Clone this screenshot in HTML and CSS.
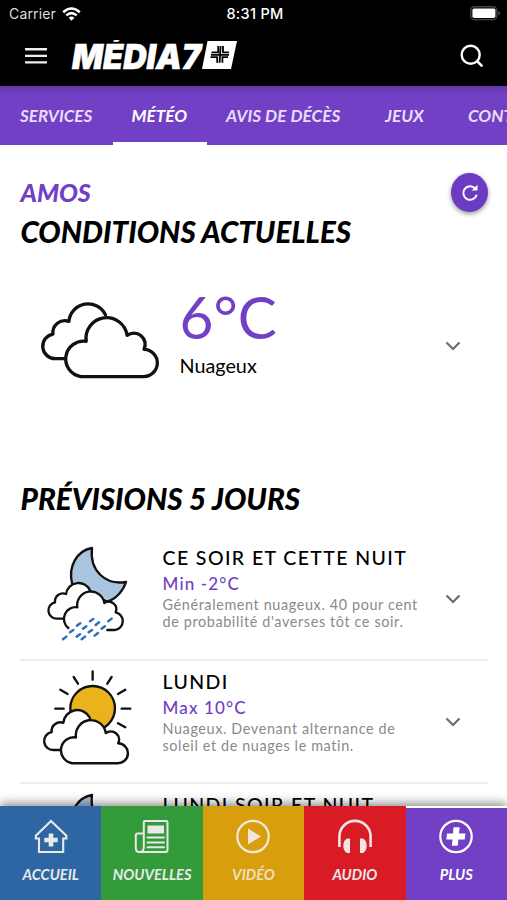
FILE: index.html
```html
<!DOCTYPE html>
<html lang="fr">
<head>
<meta charset="utf-8">
<title>Météo</title>
<link rel="stylesheet" href="styles.css">
</head>
<body>
<svg class="defs" width="0" height="0" aria-hidden="true">
  <symbol id="clouds" viewBox="55 60 370 240" overflow="visible">
    <g fill="#fff" stroke="#111" stroke-width="10" stroke-linejoin="round" stroke-linecap="round">
      <path d="M258 104A58 58 0 0 0 148 124A36 36 0 0 0 100 162A37.3 37.3 0 0 0 108 236H150L220 150Z" stroke="none"/>
      <path d="M258 104A58 58 0 0 0 148 124A36 36 0 0 0 100 162A37.3 37.3 0 0 0 108 236H135" fill="none"/>
      <path d="M184 290H372A41 41 0 0 0 374 208A34 34 0 0 0 323 166A62 62 0 0 0 200 184A53.5 53.5 0 0 0 184 290Z"/>
    </g>
  </symbol>
  <symbol id="night" viewBox="30 30 270 310">
    <path d="M186 54C140 62 114 110 126 160L230 215C258 208 280 182 288 156C228 166 178 124 186 54Z" fill="#a9c4df" stroke="#111" stroke-width="7" stroke-linejoin="round"/>
    <g fill="#fff" stroke="#111" stroke-width="7" stroke-linecap="round" stroke-linejoin="round">
      <path d="M181 183A38 38 0 0 0 108 192A24 24 0 0 0 75 217A24.8 24.8 0 0 0 82 266H110L150 215Z" stroke="none"/>
      <path d="M181 183A38 38 0 0 0 108 192A24 24 0 0 0 75 217A24.8 24.8 0 0 0 82 266H99" fill="none"/>
      <path d="M115 294A35 35 0 0 1 142 232A41 41 0 0 1 223 219A23 23 0 0 1 257 247A27 27 0 0 1 256 300H232"/>
    </g>
    <path d="M99 328L109 320M120 307L130 300M141 287L151 280M140 320L150 313M159 296L169 289M180 274L190 267M155 328L165 320M176 307L186 300M197 285L207 277M194 317L204 309M215 296L225 289M235 274L245 266" stroke="#2e70bd" stroke-width="7.5" stroke-linecap="round"/>
  </symbol>
  <symbol id="chevron" viewBox="0 0 16 10"><path d="M1.5 1.5L8 8L14.5 1.5" fill="none" stroke="#6b6b6b" stroke-width="2.2"/></symbol>
</svg>

<header class="header">
  <div class="status">
    <div class="carrier"><span>Carrier</span>
      <svg width="19" height="14" viewBox="0 0 19 14"><g fill="none" stroke="#fff" stroke-width="2.5"><path d="M1.2 5.2Q9.5 -2.2 17.8 5.2"/><path d="M4.3 8.4Q9.5 3.8 14.7 8.4"/></g><path d="M6.6 10.7Q9.5 8.4 12.4 10.7L9.5 13.7Z" fill="#fff"/></svg>
    </div>
    <time>8:31 PM</time>
    <svg class="battery" width="31" height="15" viewBox="0 0 31 15"><rect x=".8" y=".8" width="26" height="12.8" rx="3.6" fill="none" stroke="#444" stroke-width="1.4"/><rect x="2.4" y="2.4" width="23" height="9.6" rx="1.8" fill="#fff"/><path d="M28.4 4.8Q31.5 7.2 28.4 9.6Z" fill="#555"/></svg>
  </div>
  <div class="appbar">
    <svg width="22" height="16" viewBox="0 0 22 16"><path d="M0 1.3H22M0 7.9H22M0 14.4H22" stroke="#eee" stroke-width="2.4"/></svg>
    <svg class="logo" width="168" height="32" viewBox="0 0 168 32">
      <text x="1" y="29" textLength="129" lengthAdjust="spacingAndGlyphs" class="logo-text">MÉDIA7</text>
      <path d="M136.500 1H166L160 29H131Z" fill="#fff"/>
      <path d="M147.200 6V12.400H140.500M152 6V12.400H158M146.200 22.800V17.200H139.500M151.400 22.800V17.200H157M149.600 6L148.600 22.800M140 14.800H158" fill="none" stroke="#000" stroke-width="1.800"/>
    </svg>
    <svg class="search" width="24" height="24" viewBox="0 0 24 24"><circle cx="10.7" cy="10.7" r="9" fill="none" stroke="#fff" stroke-width="2.4"/><path d="M17 17L22.3 22.3" stroke="#fff" stroke-width="2.5"/></svg>
  </div>
</header>

<nav class="tabs">
  <a class="tab t1">SERVICES</a><a class="tab t2 active">MÉTÉO</a><a class="tab t3">AVIS DE DÉCÈS</a><a class="tab t4">JEUX</a><a class="tab t5">CONTACT</a>
</nav>

<main class="content">
  <div class="place">
    <div><p class="city">AMOS</p><h1 class="heading">CONDITIONS ACTUELLES</h1></div>
    <button class="refresh" aria-label="Actualiser"><svg width="18" height="18" viewBox="0 0 18 18"><path d="M14.2 4.4A6.8 6.8 0 1 0 15.7 10.8" fill="none" stroke="#fff" stroke-width="2"/><path d="M16.5 .8V6.6H10.6Z" fill="#fff"/></svg></button>
  </div>
  <section class="current">
    <svg class="current-icon" width="123" height="80"><use href="#clouds"/></svg>
    <div class="current-text"><div class="temp">6°C</div><div class="sky">Nuageux</div></div>
    <svg class="chev" width="16" height="10"><use href="#chevron"/></svg>
  </section>
  <h2 class="heading five">PRÉVISIONS 5 JOURS</h2>
  <section class="forecast">
    <article class="row">
      <svg class="icon" width="90" height="103.3"><use href="#night"/></svg>
      <div class="info"><h3>CE SOIR ET CETTE NUIT</h3><div class="deg">Min -2°C</div><p>Généralement nuageux. 40 pour cent<br>de probabilité d'averses tôt ce soir.</p></div>
      <svg class="chev" width="16" height="10"><use href="#chevron"/></svg>
    </article>
    <article class="row">
      <svg class="icon" width="93.3" height="103.3" viewBox="30 27 280 310">
        <circle cx="188" cy="160" r="67" fill="#eab31b" stroke="#111" stroke-width="7"/>
        <path d="M188 49V74M131 66L144 86M245 66L232 86M91 104L113 117M286 104L264 117M76 161H101M275 161H301M264 205L286 217" stroke="#111" stroke-width="7" stroke-linecap="round"/>
        <use href="#clouds" x="32" y="157" width="270" height="175"/>
      </svg>
      <div class="info"><h3>LUNDI</h3><div class="deg">Max 10°C</div><p>Nuageux. Devenant alternance de<br>soleil et de nuages le matin.</p></div>
      <svg class="chev" width="16" height="10"><use href="#chevron"/></svg>
    </article>
    <article class="row">
      <svg class="icon" width="90" height="103.3"><use href="#night"/></svg>
      <div class="info"><h3>LUNDI SOIR ET NUIT</h3></div>
    </article>
  </section>
</main>

<nav class="bottom">
  <a class="item home"><svg width="36" height="36" viewBox="0 0 36 36"><path d="M2.8 19.5H6V33H30.2V19.5H33.4V16.8L18 2L2.8 16.8Z" fill="none" stroke="#e9e9e9" stroke-width="2.1"/><path d="M15.7 14.5h4.6v4.2h4.4v4.6h-4.4v4.2h-4.6v-4.2h-4.4v-4.6h4.4z" fill="#e9e9e9"/></svg><span>ACCUEIL</span></a>
  <a class="item news"><svg width="36" height="36" viewBox="0 0 36 36"><g fill="none" stroke="#e9e9e9" stroke-width="2"><path d="M9.8 29V3.2Q9.8 2 11 2H32.3Q33.5 2 33.5 3.2V31Q33.5 33 31.5 33H5.2Q1.8 33 1.8 29V16.5Q1.8 14.5 3.8 14.5H9.8M9.8 28Q9.8 32.6 6 33"/><path d="M13.5 18.5H30M13.5 23.4H30M13.5 28.3H30" stroke-linecap="round"/></g><path d="M13.5 6.5H30V14.5H13.5Z" fill="#e9e9e9"/></svg><span>NOUVELLES</span></a>
  <a class="item video"><svg width="36" height="36" viewBox="0 0 36 36"><circle cx="18" cy="17.5" r="15.7" fill="none" stroke="#efe9dc" stroke-width="2.2"/><path d="M13 9.5L26 17.5L13 25.5Z" fill="#efe9dc"/></svg><span>VIDÉO</span></a>
  <a class="item audio"><svg width="36" height="36" viewBox="0 0 36 36"><path d="M2.4 28V17.5A15.6 15.6 0 0 1 33.6 17.5V28" fill="none" stroke="#f0e4e4" stroke-width="2.6"/><path d="M13 19.5V34H10Q6.3 32 6.3 26.8T10 19.5ZM23 19.5V34H26Q29.7 32 29.7 26.8T26 19.5Z" fill="#f0e4e4"/></svg><span>AUDIO</span></a>
  <a class="item plus"><svg width="36" height="36" viewBox="0 0 36 36"><circle cx="18" cy="17.5" r="15.7" fill="none" stroke="#fff" stroke-width="2.2"/><path d="M15.5 8.2H21.7L21 14.5H27.5L26.7 20.5H20.4L19.7 26.7H13.8L14.5 20.5H8.3L9 14.5H15Z" fill="#fff"/></svg><span>PLUS</span></a>
</nav>
</body>
</html>
```

FILE: styles.css
```css
* { box-sizing: border-box; }
body {
  margin: 0;
  height: 900px;
  overflow: hidden;
  display: flex;
  flex-direction: column;
  background: #fff;
  color: #000;
  font-family: Lato, "Liberation Sans", sans-serif;
}
h1, h2, h3, p { margin: 0; }
.defs { display: block; flex: none; height: 0; }

.header { flex: none; height: 86px; background: #000; color: #fff; }
.status {
  display: grid;
  grid-template-columns: 1fr auto 1fr;
  align-items: center;
  height: 27px;
  padding: 0 6px 0 9px;
  font: 14px/27px Inter, sans-serif;
}
.carrier { display: flex; align-items: center; gap: 6px; color: #ddd; letter-spacing: .15px; }
.status time { font-weight: 500; font-size: 14.5px; letter-spacing: .3px; }
.battery { justify-self: end; }
.appbar { display: flex; align-items: center; height: 58px; padding: 0 23px 0 25px; }
.logo { margin-left: 24px; }
.logo-text { font: italic 900 34.5px Inter, sans-serif; fill: #fff; stroke: #fff; stroke-width: .6; }
.search { margin-left: auto; }

.tabs {
  flex: none;
  display: flex;
  height: 59px;
  overflow: hidden;
  background: linear-gradient(#6338a8, #7140c5 9px);
  white-space: nowrap;
}
.tab {
  flex: none;
  padding: 0 19px 0 20px;
  border-bottom: 3px solid transparent;
  color: #e9dcfb;
  font: italic 700 17.1px/60px Lato, sans-serif;
}
.tab.active { padding-left: 18.5px; color: #fff; border-bottom-color: #fff; }
.t1 { width: 113px; }
.t2 { width: 94px; }
.t3 { width: 158px; padding-left: 19px; letter-spacing: .1px; }
.t4 { width: 83px; }

.content { flex: 1; min-height: 0; overflow: hidden; padding: 28px 19px 0 20px; }
.place { display: flex; justify-content: space-between; height: 90px; }
.city { color: #7140c5; font: italic 900 25px/38px Lato, sans-serif; padding-left: .5px; }
.heading { font: italic 900 29.6px/42px Lato, sans-serif; white-space: nowrap; padding-left: .5px; }
.refresh {
  display: flex;
  align-items: center;
  justify-content: center;
  width: 37px;
  height: 39px;
  padding: 0;
  border: 0;
  border-radius: 50%;
  background: #6c3bc4;
  box-shadow: 0 2px 5px rgba(0, 0, 0, .4);
}
.current { display: flex; height: 215px; padding: 20px 27px 0 18px; }
.current-icon { margin-top: 17px; }
.current-text { margin-left: 18.5px; }
.temp { color: #7140c5; font-size: 58.5px; line-height: 67px; }
.sky { font-size: 19.8px; line-height: 31px; }
.current .chev { margin: 58px 0 0 auto; }
.five { height: 59px; }

.row { display: flex; height: 123.5px; padding: 3px 27px 0 20px; border-bottom: 2px solid #ececec; }
.icon { flex: none; margin-right: 32.5px; }
.row:nth-child(2) .icon { margin-right: 29.2px; }
.info { flex: none; margin-top: 5px; white-space: nowrap; }
.info h3 { font-size: 19.5px; line-height: 26px; font-weight: 500; letter-spacing: 1.4px; }
.deg { color: #7140c5; font-size: 17px; line-height: 25px; font-weight: 500; letter-spacing: 1.15px; }
.info p { color: #8a8a8a; font-size: 14.4px; line-height: 17.2px; letter-spacing: .62px; }
.row .chev { margin: 53.5px 0 0 auto; }

.bottom {
  position: relative;
  flex: none;
  display: grid;
  grid-template-columns: repeat(5, 1fr);
  height: 94px;
  box-shadow: 0 -2px 10px rgba(0, 0, 0, .5);
}
.item {
  display: flex;
  flex-direction: column;
  align-items: center;
  padding-top: 13px;
  color: #e9e9e9;
  font: italic 700 14.7px/20px Lato, sans-serif;
}
.item span { margin-top: 9px; }
.home { background: #2e66a3; }
.news { background: #339b3a; }
.video { background: #d89e0e; color: #efe0bd; }
.audio { background: #d91b26; }
.plus { background: #7140c5; color: #fff; border-top: 2px solid #fff; padding-top: 11px; }
```
